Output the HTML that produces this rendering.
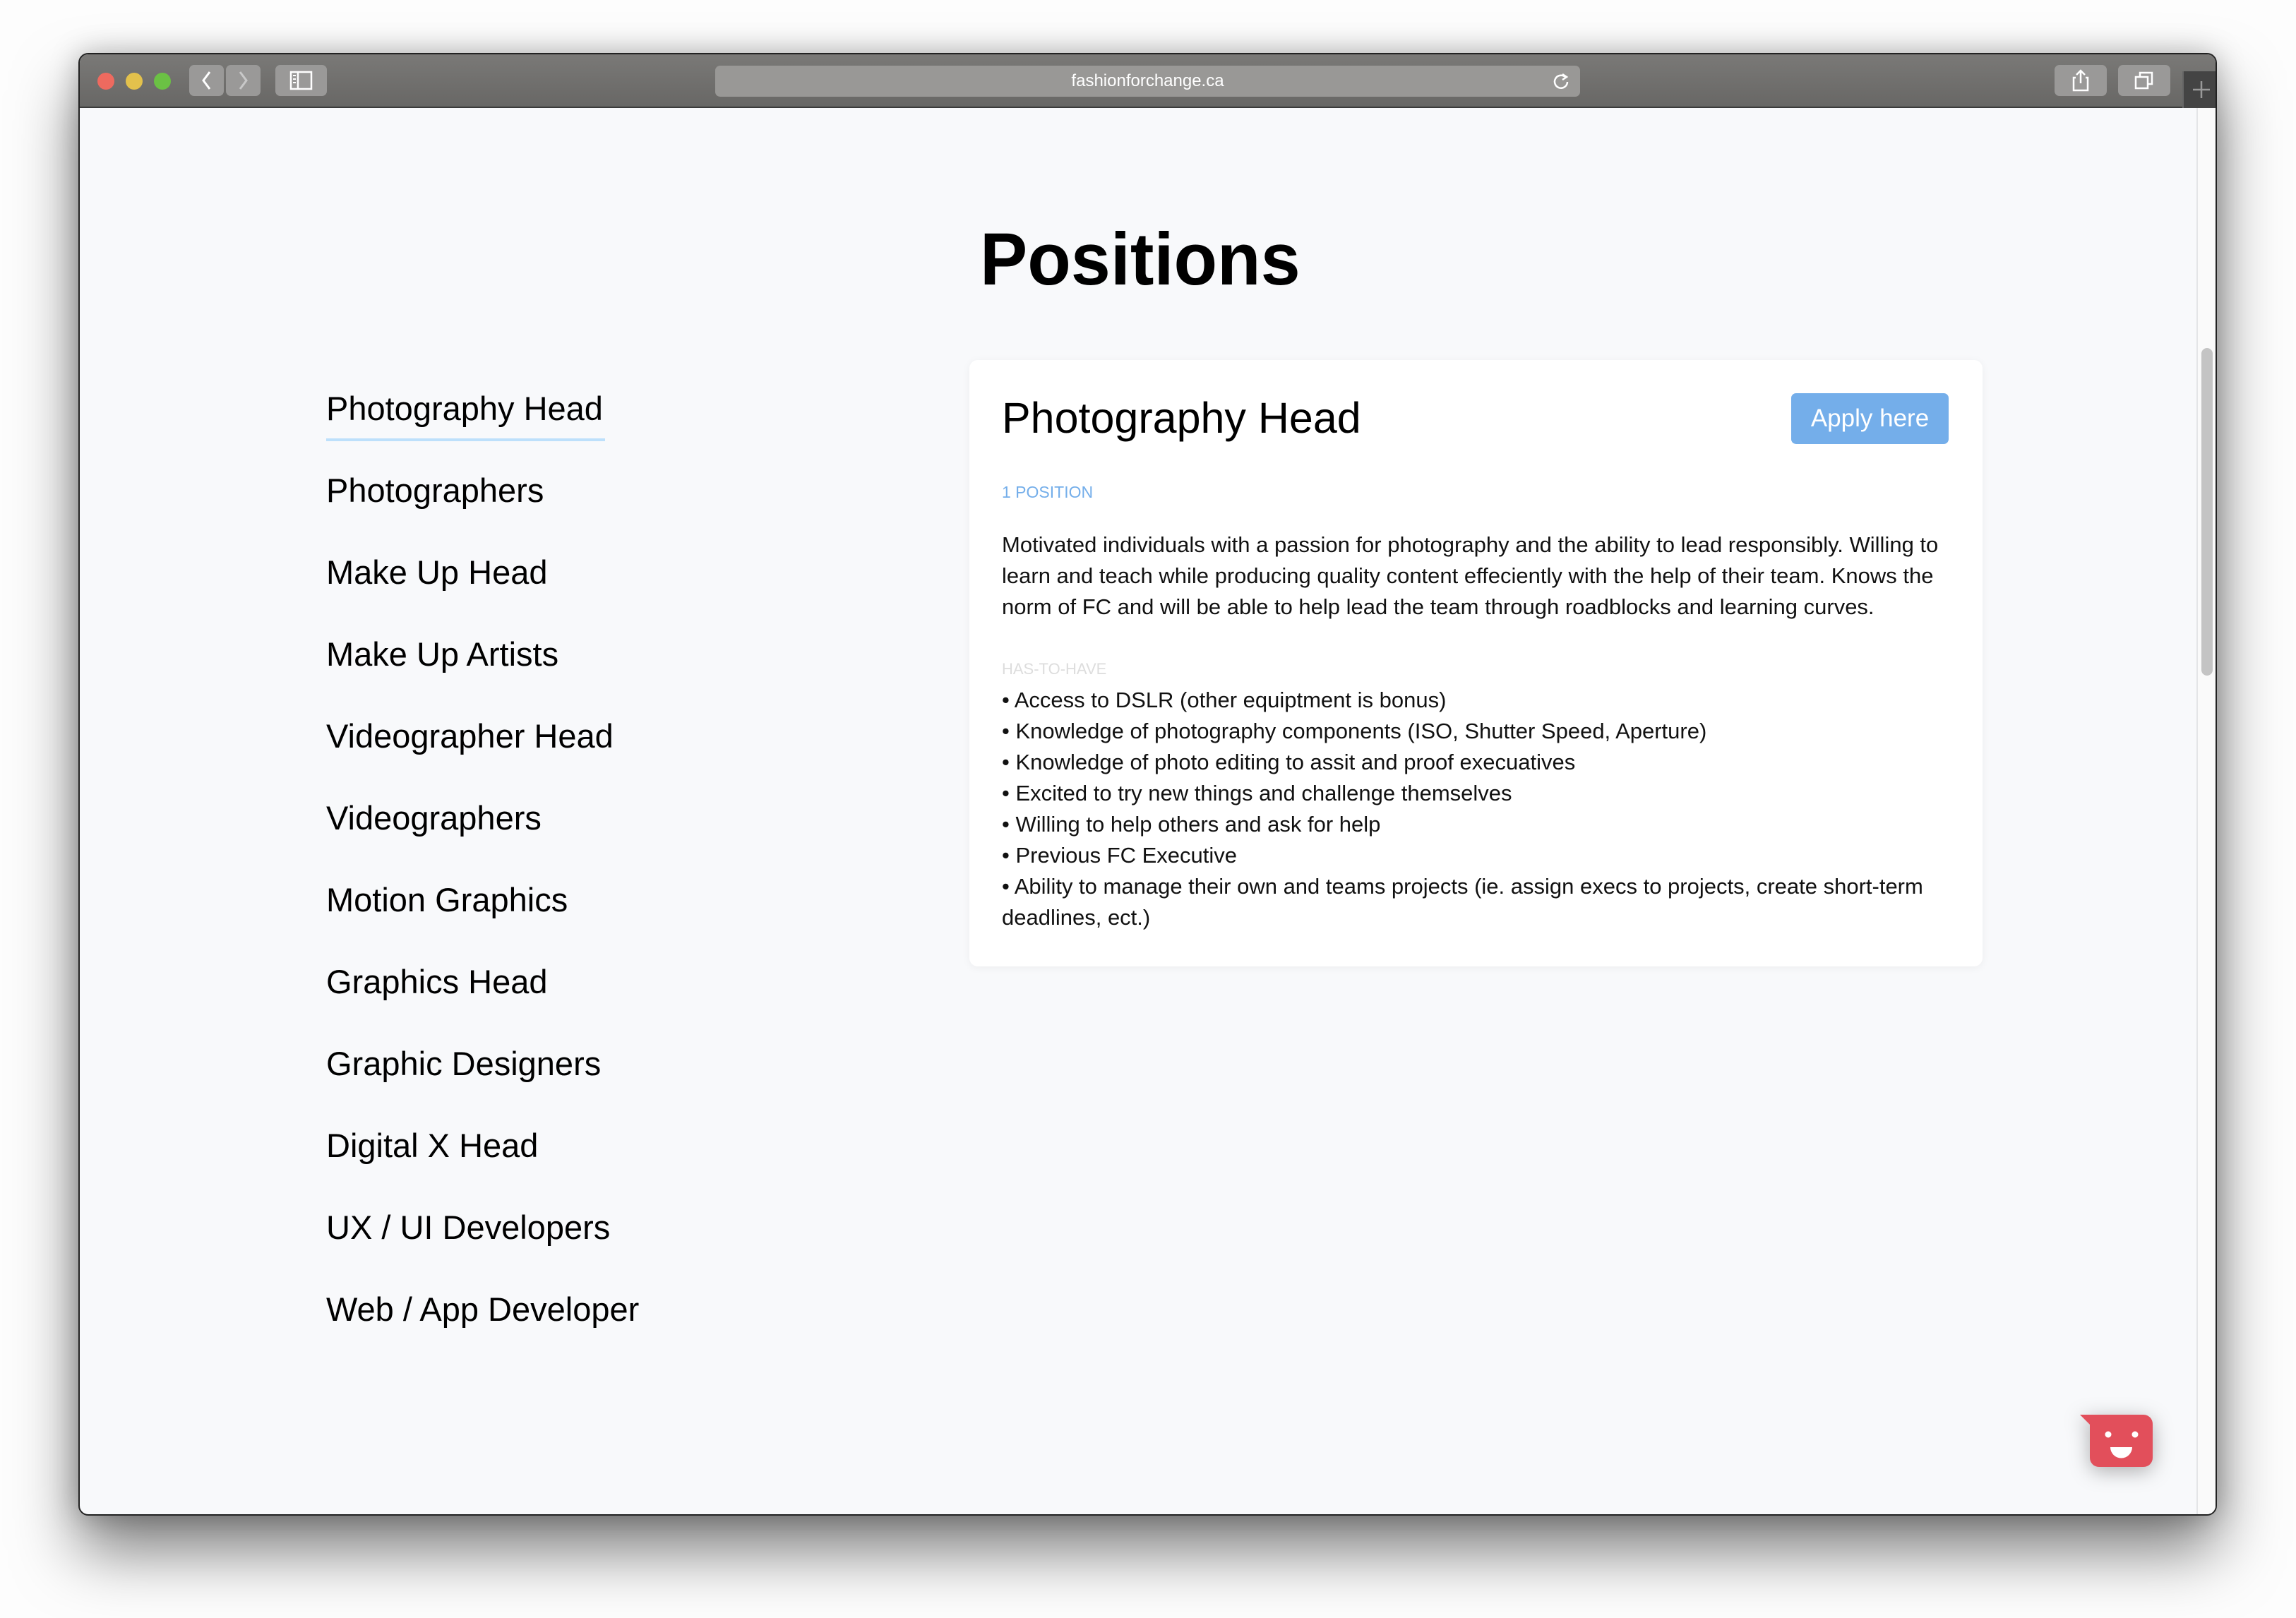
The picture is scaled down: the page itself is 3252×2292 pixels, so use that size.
<!DOCTYPE html>
<html><head><meta charset="utf-8"><style>
*{margin:0;padding:0;box-sizing:border-box}
html,body{width:3252px;height:2292px;overflow:hidden;background:#fdfdfd;font-family:"Liberation Sans",sans-serif}
.win{position:absolute;left:111px;top:75px;width:3029px;height:2072px;border-radius:14px;background:#f8f9fb;border:2px solid #222;box-shadow:0 50px 90px rgba(0,0,0,.5),0 0 40px rgba(0,0,0,.25);overflow:hidden}
.bar{position:absolute;left:0;top:0;width:100%;height:76px;background:linear-gradient(#7a7977,#686765);border-bottom:2px solid #3a3a3a}
.a{position:absolute}
.dot{position:absolute;width:24px;height:24px;border-radius:50%;top:26px}
.btn{position:absolute;top:15px;height:44px;background:#9a9998;border-radius:7px}
.lst{position:absolute;left:462px;font-size:47px;color:#000;white-space:nowrap;line-height:1}
.card{position:absolute;left:1373px;top:510px;width:1435px;height:859px;background:#fff;border-radius:12px;box-shadow:0 2px 12px rgba(0,0,0,.05)}
.p{position:absolute;left:1419px;font-size:31px;color:#111;white-space:nowrap;line-height:44px}
</style></head><body>
<div class="win">
 <div class="bar">
  <div class="dot" style="left:25px;background:#ee6a5f"></div>
  <div class="dot" style="left:65px;background:#e3c14c"></div>
  <div class="dot" style="left:105px;background:#6bc144"></div>
  <div class="btn" style="left:155px;width:49px"><svg width="49" height="44"><path d="M29 10 L20 22 L29 34" stroke="#fff" stroke-width="3" fill="none"/></svg></div>
  <div class="btn" style="left:207px;width:49px"><svg width="49" height="44"><path d="M20 10 L29 22 L20 34" stroke="#c8c8c8" stroke-width="3" fill="none"/></svg></div>
  <div class="btn" style="left:277px;width:73px"><svg width="73" height="44"><rect x="22" y="10" width="29" height="24" stroke="#fff" stroke-width="2.5" fill="none"/><line x1="32" y1="10" x2="32" y2="34" stroke="#fff" stroke-width="2.5"/><path d="M25 15h4M25 20h4M25 25h4" stroke="#fff" stroke-width="2"/></svg></div>
  <div class="btn" style="left:900px;width:1225px;top:16px;background:#999896;color:#fff;font-size:24px;text-align:center;line-height:44px">fashionforchange.ca<svg style="position:absolute;right:14px;top:10px" width="24" height="26"><path d="M17 6 A9 9 0 1 0 20 13" stroke="#fff" stroke-width="2.5" fill="none"/><path d="M13 2 L19 6 L13 10" stroke="#fff" stroke-width="2.5" fill="none"/></svg></div>
  <div class="btn" style="left:2797px;width:74px"><svg width="74" height="44"><path d="M30 18h-3v18h20v-18h-3M37 8v18M31 14l6-6 6 6" stroke="#fff" stroke-width="2.5" fill="none"/></svg></div>
  <div class="btn" style="left:2887px;width:74px"><svg width="74" height="44"><rect x="25" y="17" width="17" height="16" stroke="#fff" stroke-width="2.5" fill="none"/><path d="M31 17v-6h17v16h-6" stroke="#fff" stroke-width="2.5" fill="none"/></svg></div>
  <div class="a" style="left:2978px;top:24px;width:60px;height:52px;background:#444;border-left:2px solid #666"><svg width="50" height="52"><path d="M13 26h24M25 14v24" stroke="#999" stroke-width="2.5"/></svg></div>
 </div>
 <div class="a" style="left:2998px;top:76px;width:2px;height:2000px;background:#e4e5e7"></div>
 <div class="a" style="left:3000px;top:76px;width:30px;height:2000px;background:#fafafa"></div>
 <div class="a" style="left:3005px;top:416px;width:16px;height:464px;border-radius:8px;background:#c4c4c4"></div>
</div>
<div class="a" style="left:1388px;top:315px;font-size:105px;font-weight:bold;transform:scaleX(.96);transform-origin:left;line-height:1">Positions</div>
<div class="lst" style="top:555px">Photography Head</div>
<div class="a" style="left:462px;top:621px;width:395px;height:4px;background:#bde0fb"></div>
<div class="lst" style="top:671px">Photographers</div>
<div class="lst" style="top:787px">Make Up Head</div>
<div class="lst" style="top:903px">Make Up Artists</div>
<div class="lst" style="top:1019px">Videographer Head</div>
<div class="lst" style="top:1135px">Videographers</div>
<div class="lst" style="top:1251px">Motion Graphics</div>
<div class="lst" style="top:1367px">Graphics Head</div>
<div class="lst" style="top:1483px">Graphic Designers</div>
<div class="lst" style="top:1599px">Digital X Head</div>
<div class="lst" style="top:1715px">UX / UI Developers</div>
<div class="lst" style="top:1831px">Web / App Developer</div>
<div class="card"></div>
<div class="a" style="left:1419px;top:562px;font-size:61px;line-height:1;white-space:nowrap">Photography Head</div>
<div class="a" style="left:2537px;top:557px;width:223px;height:72px;border-radius:7px;background:#74aeea;color:#fff;font-size:35px;line-height:72px;text-align:center">Apply here</div>
<div class="a" style="left:1419px;top:684px;font-size:23px;color:#74aeea;line-height:26px">1 POSITION</div>
<div class="p" style="top:750px">Motivated individuals with a passion for photography and the ability to lead responsibly. Willing to<br>learn and teach while producing quality content effeciently with the help of their team. Knows the<br>norm of FC and will be able to help lead the team through roadblocks and learning curves.</div>
<div class="a" style="left:1419px;top:936px;font-size:22px;color:#ddd;line-height:24px">HAS-TO-HAVE</div>
<div class="p" style="top:970px">• Access to DSLR (other equiptment is bonus)<br>• Knowledge of photography components (ISO, Shutter Speed, Aperture)<br>• Knowledge of photo editing to assit and proof execuatives<br>• Excited to try new things and challenge themselves<br>• Willing to help others and ask for help<br>• Previous FC Executive<br>• Ability to manage their own and teams projects (ie. assign execs to projects, create short-term<br>deadlines, ect.)</div>
<div class="a" style="left:2940px;top:1995px;width:120px;height:95px;filter:drop-shadow(0 6px 14px rgba(0,0,0,.3))"><svg width="120" height="95"><path d="M6 9 H96 a13 13 0 0 1 13 13 V70 a13 13 0 0 1 -13 13 H33 a13 13 0 0 1 -13 -13 V23 Z" fill="#e24f5b"/><circle cx="46" cy="37" r="4.5" fill="#fff"/><circle cx="84" cy="37" r="4.5" fill="#fff"/><path d="M49 55 H80 A15.5 15.5 0 0 1 49 55 Z" fill="#fff"/></svg></div>
</body></html>
